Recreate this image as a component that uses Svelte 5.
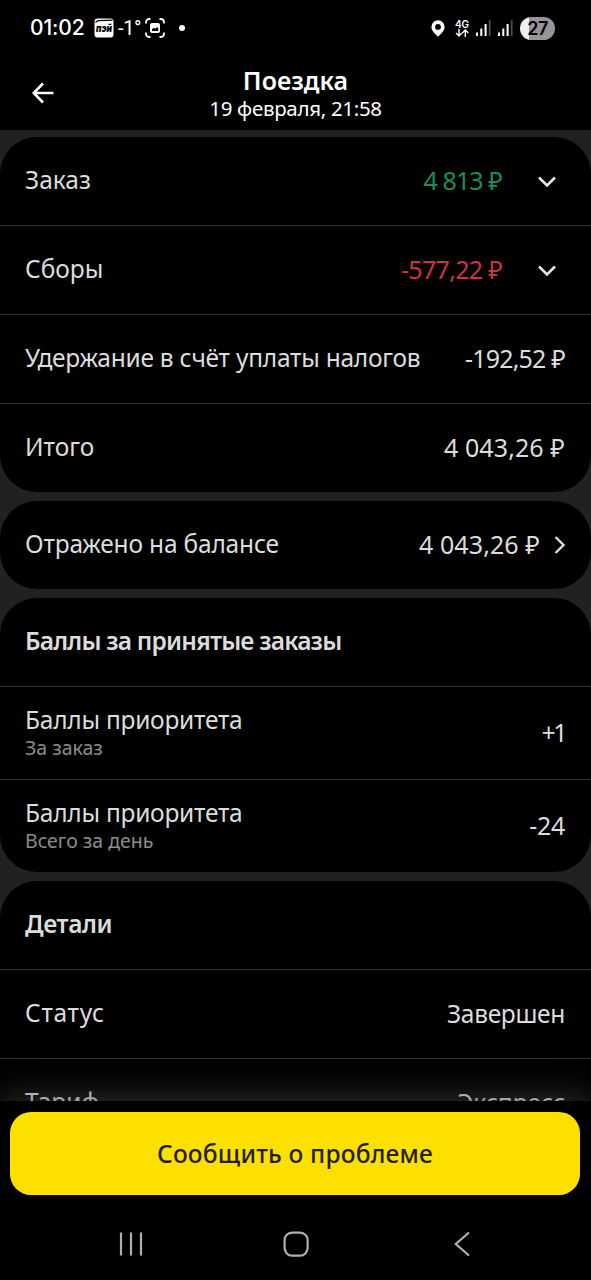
<script>
    // tracking and valueTracking are letter spacings in px
    const groups = [
        {
            rows: [
                { label: 'Заказ', value: '4 813 ₽', valueTracking: -0.9, tone: 'income', icon: 'down' },
                { label: 'Сборы', value: '-577,22 ₽', valueTracking: -0.7, tone: 'expense', icon: 'down' },
                { label: 'Удержание в счёт уплаты налогов', tracking: -0.24, value: '-192,52 ₽', valueTracking: -0.8 },
                { label: 'Итого', value: '4 043,26 ₽', valueTracking: 0.1 }
            ]
        },
        {
            rows: [{ label: 'Отражено на балансе', tracking: -0.18, value: '4 043,26 ₽', valueTracking: 0.1, icon: 'right' }]
        },
        {
            title: 'Баллы за принятые заказы',
            titleTracking: -0.8,
            rows: [
                { label: 'Баллы приоритета', tracking: -0.25, hint: 'За заказ', value: '+1', valueTracking: -2.5 },
                { label: 'Баллы приоритета', tracking: -0.25, hint: 'Всего за день', value: '-24', valueTracking: -0.3 }
            ]
        },
        {
            title: 'Детали',
            titleTracking: -0.4,
            rows: [
                { label: 'Статус', tracking: 0.7, value: 'Завершен', valueTracking: -0.3, text: true },
                { label: 'Тариф', value: 'Экспресс', text: true }
            ]
        }
    ];
</script>

<div class="screen">
    <div class="status-bar">
        <div class="status-left">
            <span class="clock">01:02</span>
            <svg class="app-badge" width="20" height="20" viewBox="0 0 20 20">
                <rect x="0.5" y="0.5" width="19" height="19" rx="3" fill="#fff" />
                <path d="M1.5 4.5 L4 2.6 L18.5 2.2" fill="none" stroke="#000" stroke-width="1.2" />
                <text x="10" y="14.2" text-anchor="middle" textLength="16" lengthAdjust="spacingAndGlyphs">пэй</text>
            </svg>
            <span class="temp">-1<i>°</i></span>
            <svg class="capture" width="20" height="20" viewBox="0 0 20 20" fill="none" stroke="#fff" stroke-width="1.8">
                <path d="M1 5.5V4.5Q1 1 4.5 1H5.5M14.5 1H15.5Q19 1 19 4.5V5.5M19 14.5V15.5Q19 19 15.5 19H14.5M5.5 19H4.5Q1 19 1 15.5V14.5" />
                <rect x="5" y="5" width="10" height="10" rx="2" fill="#fff" stroke="none" />
                <path d="M7 13V11L9 9.8L10.5 10.8L12 9L13.2 10V13Z" fill="#000" stroke="none" />
            </svg>
            <span class="dot"></span>
        </div>
        <div class="status-right">
            <svg width="14" height="17" viewBox="0 0 14 17">
                <path fill="#fff" fill-rule="evenodd" d="M7 0.3A6.6 6.6 0 0 1 13.6 6.9C13.6 10.7 9.8 13.8 7 16.8C4.2 13.8 0.4 10.7 0.4 6.9A6.6 6.6 0 0 1 7 0.3ZM7 4A2.9 2.9 0 1 0 7 9.8A2.9 2.9 0 1 0 7 4Z" />
            </svg>
            <div class="network">
                <span>4G</span>
                <svg width="14" height="8" viewBox="0 0 14 8" fill="none" stroke="#fff" stroke-width="1.4">
                    <path d="M4 0V7M1 4L4 7L7 4M10.3 8V1M7.3 4L10.3 1L13.3 4" />
                </svg>
            </div>
            {#each [0, 1] as sim (sim)}
                <svg class="signal" width="15" height="16" viewBox="0 0 15 16">
                    <path fill="#fff" d="M0 12.5H2V16H0ZM4.3 8.5H6.3V16H4.3ZM8.6 4H10.6V16H8.6Z" />
                    <path fill="#4c4c4c" d="M12.8 0H14.6V16H12.8Z" />
                </svg>
            {/each}
            <span class="battery">27</span>
        </div>
    </div>

    <header class="header">
        <button class="back" aria-label="Назад">
            <svg width="22" height="22" viewBox="0 0 22 22" fill="none" stroke="#fff" stroke-width="2.6">
                <path d="M21.5 11H2M11 1.5L1.7 11L11 20.5" />
            </svg>
        </button>
        <div class="heading">
            <h1>Поездка</h1>
            <p>19 февраля, 21:58</p>
        </div>
    </header>

    <main class="content">
        {#each groups as group}
            <section class="card">
                {#if group.title}
                    <div class="row"><h2 style:letter-spacing="{group.titleTracking}px">{group.title}</h2></div>
                {/if}
                {#each group.rows as row}
                    <div class="row" class:tall={row.hint}>
                        <div class="label">
                            <span style:letter-spacing="{row.tracking ?? 0}px">{row.label}</span>
                            {#if row.hint}<small>{row.hint}</small>{/if}
                        </div>
                        <span
                            class="value {row.tone ?? ''}"
                            class:text={row.text}
                            style:letter-spacing="{row.valueTracking ?? 0}px"
                        >{row.value}</span>
                        {#if row.icon === 'down'}
                            <svg class="down" width="18" height="12" viewBox="0 0 18 12" fill="none" stroke="#e6e6e6" stroke-width="2.5">
                                <path d="M1 1.5L9 9.5L17 1.5" />
                            </svg>
                        {:else if row.icon === 'right'}
                            <svg class="right" width="11" height="18" viewBox="0 0 11 18" fill="none" stroke="#dcdcdc" stroke-width="2.4">
                                <path d="M1.5 1L9.500 9L1.5 17" />
                            </svg>
                        {/if}
                    </div>
                {/each}
            </section>
        {/each}
    </main>

    <footer class="footer">
        <button class="report">Сообщить о проблеме</button>
    </footer>

    <nav class="nav-bar">
        <svg width="24" height="26" viewBox="0 0 24 26" stroke="#b0b0b0" stroke-width="2.2">
            <path d="M2 1.5V24.5M12 1.5V24.5M22 1.5V24.5" />
        </svg>
        <svg class="home" width="26" height="26" viewBox="0 0 26 26" fill="none" stroke="#b0b0b0" stroke-width="2.2">
            <rect x="1.6" y="1.6" width="23" height="23" rx="7.5" />
        </svg>
        <svg width="16" height="26" viewBox="0 0 16 26" fill="none" stroke="#b0b0b0" stroke-width="2.2">
            <path d="M15 1.5L1.8 13L15 24.5" />
        </svg>
    </nav>
</div>

<style>
    :global(body) {
        background: #000;
    }

    .screen {
        width: 591px;
        height: 1280px;
        display: flex;
        flex-direction: column;
        overflow: hidden;
        background: #000;
        color: #dcdcdc;
        font-family: 'Noto Sans', 'Open Sans', sans-serif;
    }

    button {
        border: none;
        padding: 0;
        font-family: inherit;
    }

    .status-bar {
        height: 56px;
        flex: none;
        box-sizing: border-box;
        padding: 0 36px 0 30px;
        display: flex;
        justify-content: space-between;
        align-items: center;
        color: #fff;
    }

    .status-left,
    .status-right {
        display: flex;
        align-items: center;
    }

    .clock {
        width: 64px;
        font: 500 21px/24px Inter, Roboto, sans-serif;
        letter-spacing: -0.1px;
    }

    .app-badge text {
        font: italic 900 10px Inter, sans-serif;
    }

    .temp {
        width: 28px;
        margin-left: 4px;
        font: 400 20px/24px Roboto, sans-serif;
        letter-spacing: -0.4px;
        white-space: nowrap;
    }

    .temp i {
        font-style: normal;
    }

    .capture {
        margin-left: -1px;
    }

    .dot {
        width: 6px;
        height: 6px;
        margin-left: 14px;
        border-radius: 50%;
        background: #fff;
    }

    .network {
        width: 14px;
        margin: 0 7px 0 10px;
        display: flex;
        flex-direction: column;
        align-items: center;
    }

    .network span {
        font: 600 10px/10px Inter, sans-serif;
    }

    .signal {
        margin-right: 7px;
    }

    .battery {
        width: 35px;
        height: 23px;
        border-radius: 12px;
        background: linear-gradient(to right, #f0f0f0 9px, #969696 9px);
        color: #000;
        font: 600 18px/23px Inter, sans-serif;
        letter-spacing: -0.6px;
        text-align: center;
    }

    .header {
        height: 74px;
        flex: none;
        display: grid;
        grid-template-columns: 84px 1fr 84px;
    }

    .back {
        padding-left: 2px;
        background: none;
        display: flex;
        align-items: center;
        justify-content: center;
    }

    .heading {
        text-align: center;
        color: #fff;
        padding-top: 8px;
    }

    .heading h1 {
        margin: 0;
        font-size: 25px;
        line-height: 32px;
        font-weight: 600;
    }

    .heading p {
        margin: 0;
        font-size: 20.5px;
        line-height: 24px;
        letter-spacing: -0.3px;
    }

    .content {
        height: 971px;
        flex: none;
        box-sizing: border-box;
        padding-top: 7px;
        display: flex;
        flex-direction: column;
        gap: 9px;
        overflow: hidden;
        background: #222120;
    }

    .card {
        flex: none;
        border-radius: 37px;
        background: #000;
    }

    .row {
        height: 88px;
        box-sizing: border-box;
        padding: 0 26px 2px 25px;
        display: flex;
        align-items: center;
    }

    .row.tall {
        height: 92px;
    }

    .row + .row {
        border-top: 1px solid #353535;
        height: 89px;
    }

    .row + .row.tall {
        height: 93px;
    }

    .row h2 {
        margin: 0 0 2px;
        font-size: 24.5px;
        font-weight: 600;
    }

    .label {
        flex: 1;
        display: flex;
        flex-direction: column;
        font-size: 24.5px;
        line-height: 32px;
        white-space: nowrap;
    }

    .label small {
        color: #8c8c8c;
        font-size: 19.5px;
        line-height: 24px;
    }

    .value {
        font-size: 25px;
        white-space: nowrap;
    }

    .value.text {
        font-size: 24.5px;
    }

    .value.income {
        color: #1a8f55;
    }

    .value.expense {
        color: #cc3344;
    }

    .down {
        margin: 4px 9px 0 36px;
    }

    .right {
        margin: 2px 0 0 14px;
    }

    .footer {
        position: relative;
        height: 106px;
        flex: none;
        box-sizing: border-box;
        padding: 11px 11px 0 10px;
        background: #000;
        box-shadow: 0 0 38px rgba(72, 72, 70, 0.8);
    }

    .report {
        width: 100%;
        height: 83px;
        border-radius: 21px;
        background: #fde000;
        color: #231f14;
        font-size: 24.5px;
        font-weight: 500;
        letter-spacing: 0.2px;
    }

    .nav-bar {
        position: relative;
        flex: 1;
        box-sizing: border-box;
        padding: 0 121px 0 119px;
        background: #000;
        display: flex;
        align-items: center;
        justify-content: space-between;
    }

    .home {
        margin-right: 5px;
    }
</style>
